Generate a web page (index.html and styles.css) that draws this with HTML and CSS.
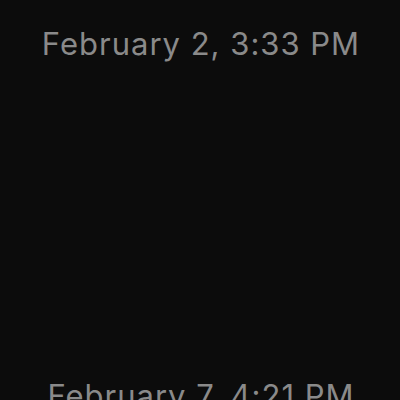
FILE: index.html
```html
<!DOCTYPE html>
<html>
<head>
<meta charset="utf-8">
<link rel="stylesheet" href="styles.css">
</head>
<body>
<div class="feed">
  <div class="stamp">February 2, 3:33 PM</div>
  <div class="gap"></div>
  <div class="stamp">February 7, 4:21 PM</div>
</div>
</body>
</html>
```
FILE: styles.css
```css
html, body {
  margin: 0;
  padding: 0;
  background: #0c0c0c;
  width: 400px;
  height: 400px;
  overflow: hidden;
}
.feed {
  display: flex;
  flex-direction: column;
  align-items: center;
  padding-top: 26px;
  padding-left: 2px;
}
.stamp {
  font-family: Inter, "Noto Sans", sans-serif;
  font-size: 31px;
  line-height: 36px;
  letter-spacing: 1px;
  color: #8a8a8a;
  white-space: nowrap;
}
.gap {
  height: 316px;
}
```
